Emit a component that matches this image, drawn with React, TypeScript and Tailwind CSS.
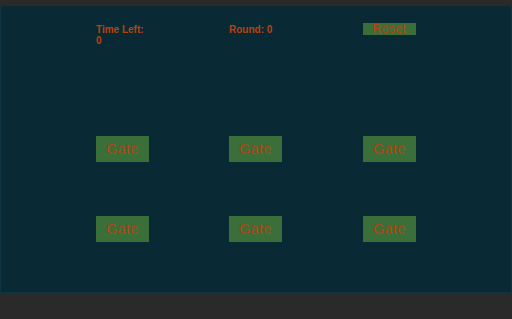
import React from "react";

const Gate = () => (
  <div className="w-[53px] h-[26px] bg-[#3b6f3a] flex items-center justify-center text-[14px] text-[#b8420e] leading-none tracking-[0.5px]">
    Gate
  </div>
);

export default function App() {
  return (
    <div className="w-[512px] h-[319px] flex flex-col bg-[#2a2a2a]" style={{ fontFamily: '"Liberation Sans", Arial, sans-serif' }}>
      <div className="h-[5px] bg-[#2a2a2a]" />
      <div className="h-[288px] bg-[#092a35] border border-[#0f3444] pl-[95px] pt-[17px]">
        <div className="grid grid-cols-[133px_134px_53px] text-[#b8420e]">
          <div className="text-[10px] font-bold leading-[11px] pt-[1px]">
            <div>Time Left:</div>
            <div>0</div>
          </div>
          <div className="text-[10px] font-bold leading-[11px] pt-[1px]">Round: 0</div>
          <div className="h-[12px] bg-[#3b6f3a] flex items-center justify-center text-[12px] leading-none tracking-[0.5px]">Reset</div>
        </div>
        <div className="grid grid-cols-[133px_134px_53px] mt-[90px] gap-y-[54px]">
          <Gate />
          <Gate />
          <Gate />
          <Gate />
          <Gate />
          <Gate />
        </div>
      </div>
      <div className="flex-1 bg-[#2a2a2a]" />
    </div>
  );
}
